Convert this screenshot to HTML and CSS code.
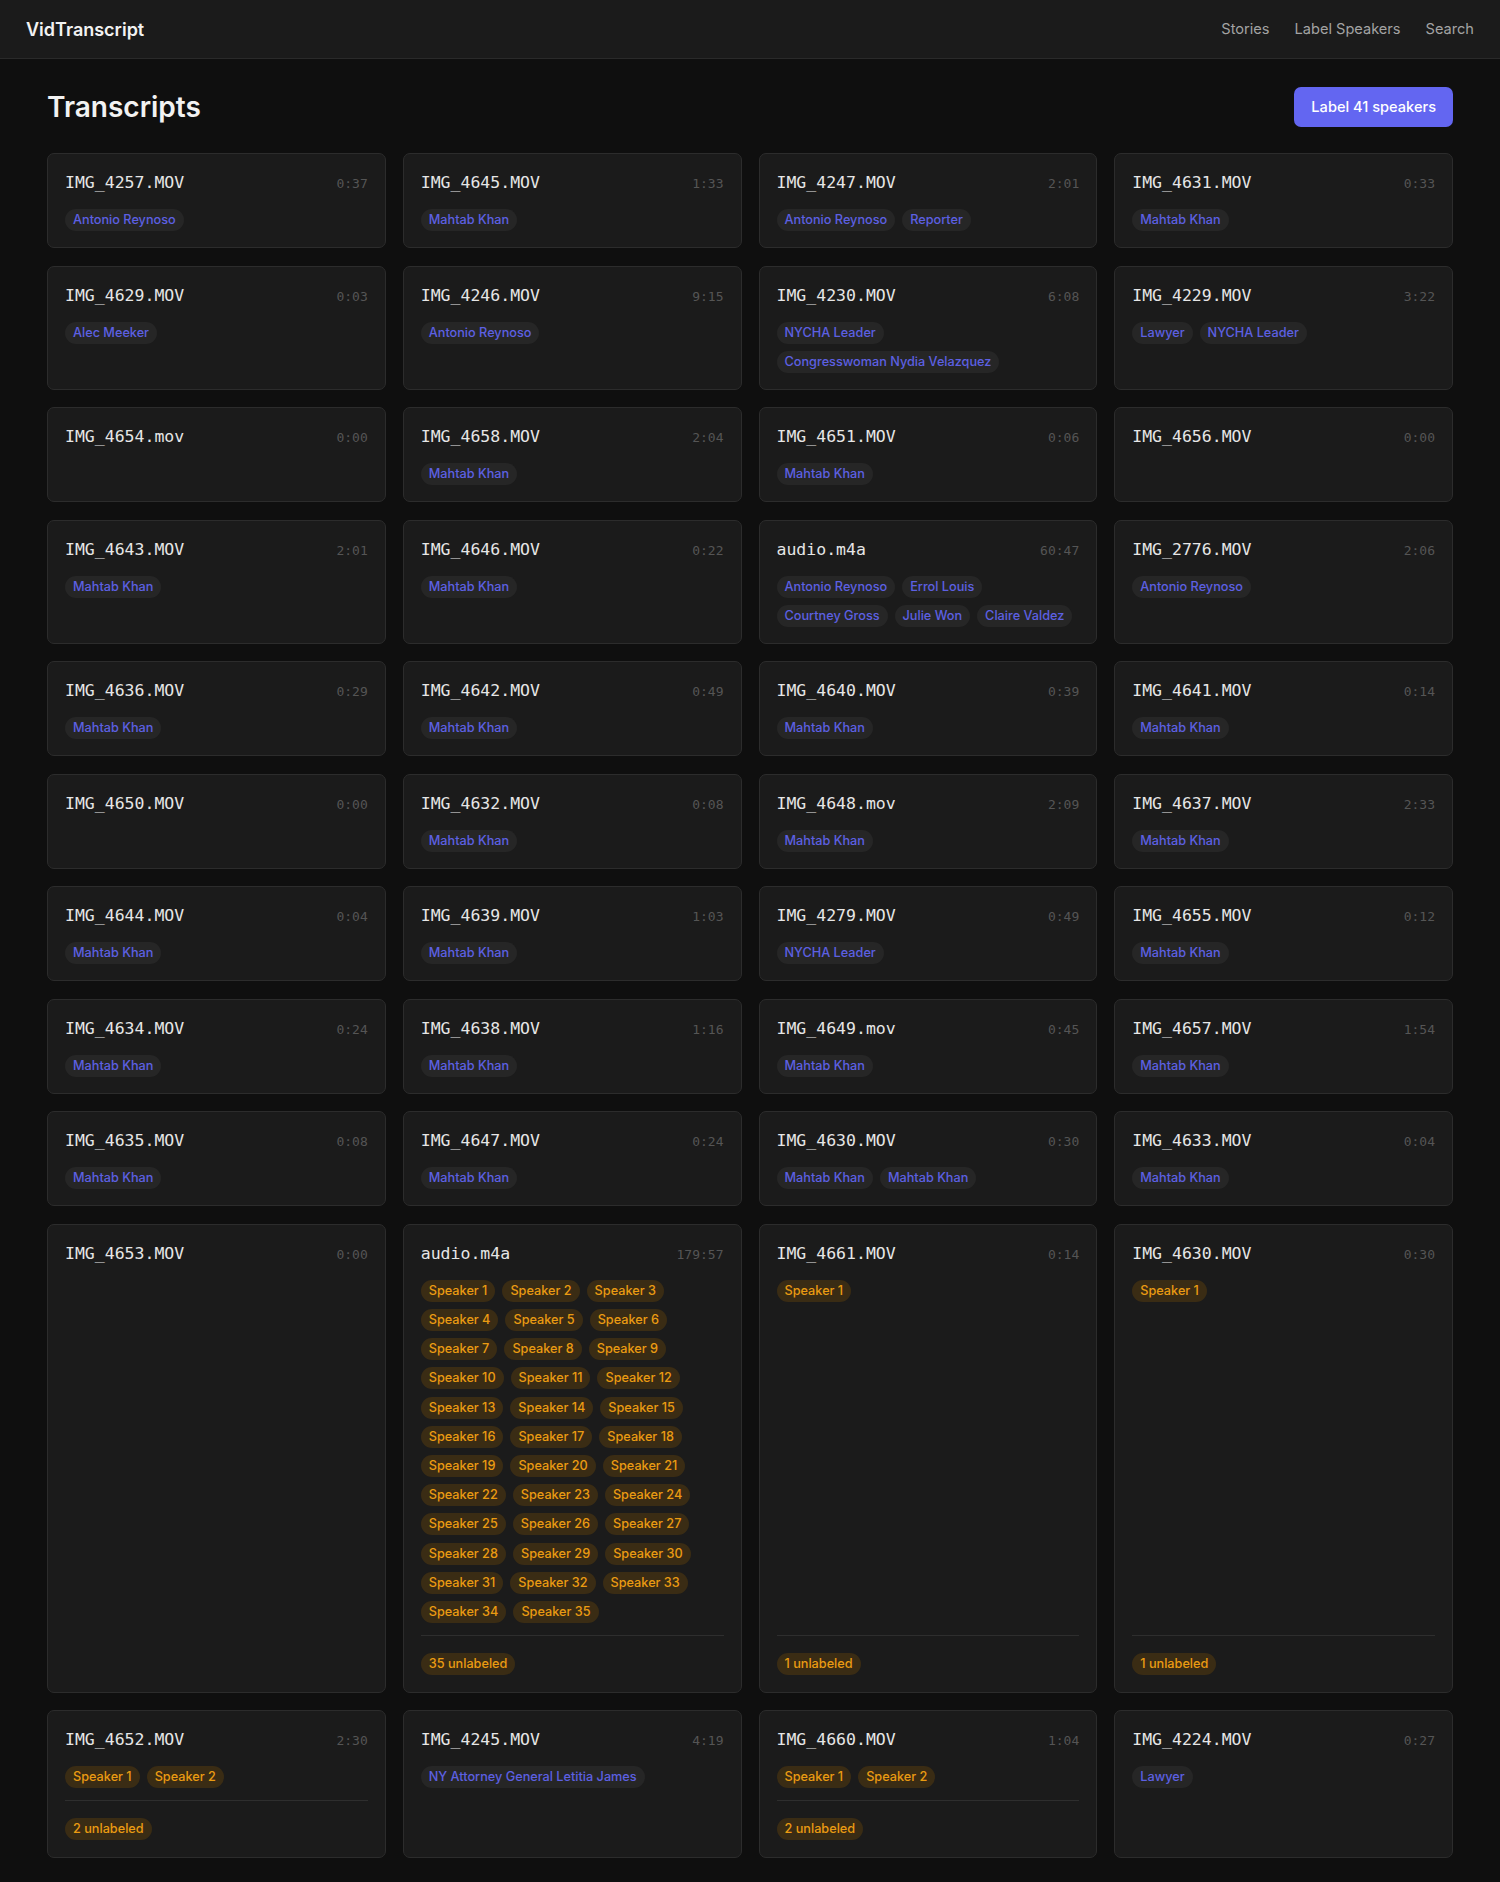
FILE: index.html
```html
<!DOCTYPE html>
<html lang="en">
  <head>
    <meta charset="UTF-8" />
    <meta name="viewport" content="width=device-width, initial-scale=1.0" />
    <title>VidTranscript</title>
    <link rel="stylesheet" href="styles.css">
  </head>
  <body>
    <header class="topbar">
      <a href="#" class="brand">VidTranscript</a>
      <nav class="nav">
        <a href="#">Stories</a>
        <a href="#">Label Speakers</a>
        <a href="#">Search</a>
      </nav>
    </header>

    <main class="page">
      <div class="page-head">
        <h1 class="page-title">Transcripts</h1>
        <a href="#" class="btn btn-primary">Label 41 speakers</a>
      </div>

      <div class="grid">
        <!-- row 1 -->
        <div class="card">
          <div class="card-head"><span class="file">IMG_4257.MOV</span><span class="dur">0:37</span></div>
          <div class="chips"><span class="chip">Antonio Reynoso</span></div>
        </div>
        <div class="card">
          <div class="card-head"><span class="file">IMG_4645.MOV</span><span class="dur">1:33</span></div>
          <div class="chips"><span class="chip">Mahtab Khan</span></div>
        </div>
        <div class="card">
          <div class="card-head"><span class="file">IMG_4247.MOV</span><span class="dur">2:01</span></div>
          <div class="chips"><span class="chip">Antonio Reynoso</span><span class="chip">Reporter</span></div>
        </div>
        <div class="card">
          <div class="card-head"><span class="file">IMG_4631.MOV</span><span class="dur">0:33</span></div>
          <div class="chips"><span class="chip">Mahtab Khan</span></div>
        </div>

        <!-- row 2 -->
        <div class="card">
          <div class="card-head"><span class="file">IMG_4629.MOV</span><span class="dur">0:03</span></div>
          <div class="chips"><span class="chip">Alec Meeker</span></div>
        </div>
        <div class="card">
          <div class="card-head"><span class="file">IMG_4246.MOV</span><span class="dur">9:15</span></div>
          <div class="chips"><span class="chip">Antonio Reynoso</span></div>
        </div>
        <div class="card">
          <div class="card-head"><span class="file">IMG_4230.MOV</span><span class="dur">6:08</span></div>
          <div class="chips"><span class="chip">NYCHA Leader</span><span class="chip">Congresswoman Nydia Velazquez</span></div>
        </div>
        <div class="card">
          <div class="card-head"><span class="file">IMG_4229.MOV</span><span class="dur">3:22</span></div>
          <div class="chips"><span class="chip">Lawyer</span><span class="chip">NYCHA Leader</span></div>
        </div>

        <!-- row 3 -->
        <div class="card">
          <div class="card-head"><span class="file">IMG_4654.mov</span><span class="dur">0:00</span></div>
        </div>
        <div class="card">
          <div class="card-head"><span class="file">IMG_4658.MOV</span><span class="dur">2:04</span></div>
          <div class="chips"><span class="chip">Mahtab Khan</span></div>
        </div>
        <div class="card">
          <div class="card-head"><span class="file">IMG_4651.MOV</span><span class="dur">0:06</span></div>
          <div class="chips"><span class="chip">Mahtab Khan</span></div>
        </div>
        <div class="card">
          <div class="card-head"><span class="file">IMG_4656.MOV</span><span class="dur">0:00</span></div>
        </div>

        <!-- row 4 -->
        <div class="card">
          <div class="card-head"><span class="file">IMG_4643.MOV</span><span class="dur">2:01</span></div>
          <div class="chips"><span class="chip">Mahtab Khan</span></div>
        </div>
        <div class="card">
          <div class="card-head"><span class="file">IMG_4646.MOV</span><span class="dur">0:22</span></div>
          <div class="chips"><span class="chip">Mahtab Khan</span></div>
        </div>
        <div class="card">
          <div class="card-head"><span class="file">audio.m4a</span><span class="dur">60:47</span></div>
          <div class="chips">
            <span class="chip">Antonio Reynoso</span><span class="chip">Errol Louis</span>
            <span class="chip">Courtney Gross</span><span class="chip">Julie Won</span><span class="chip">Claire Valdez</span>
          </div>
        </div>
        <div class="card">
          <div class="card-head"><span class="file">IMG_2776.MOV</span><span class="dur">2:06</span></div>
          <div class="chips"><span class="chip">Antonio Reynoso</span></div>
        </div>

        <!-- row 5 -->
        <div class="card">
          <div class="card-head"><span class="file">IMG_4636.MOV</span><span class="dur">0:29</span></div>
          <div class="chips"><span class="chip">Mahtab Khan</span></div>
        </div>
        <div class="card">
          <div class="card-head"><span class="file">IMG_4642.MOV</span><span class="dur">0:49</span></div>
          <div class="chips"><span class="chip">Mahtab Khan</span></div>
        </div>
        <div class="card">
          <div class="card-head"><span class="file">IMG_4640.MOV</span><span class="dur">0:39</span></div>
          <div class="chips"><span class="chip">Mahtab Khan</span></div>
        </div>
        <div class="card">
          <div class="card-head"><span class="file">IMG_4641.MOV</span><span class="dur">0:14</span></div>
          <div class="chips"><span class="chip">Mahtab Khan</span></div>
        </div>

        <!-- row 6 -->
        <div class="card">
          <div class="card-head"><span class="file">IMG_4650.MOV</span><span class="dur">0:00</span></div>
        </div>
        <div class="card">
          <div class="card-head"><span class="file">IMG_4632.MOV</span><span class="dur">0:08</span></div>
          <div class="chips"><span class="chip">Mahtab Khan</span></div>
        </div>
        <div class="card">
          <div class="card-head"><span class="file">IMG_4648.mov</span><span class="dur">2:09</span></div>
          <div class="chips"><span class="chip">Mahtab Khan</span></div>
        </div>
        <div class="card">
          <div class="card-head"><span class="file">IMG_4637.MOV</span><span class="dur">2:33</span></div>
          <div class="chips"><span class="chip">Mahtab Khan</span></div>
        </div>

        <!-- row 7 -->
        <div class="card">
          <div class="card-head"><span class="file">IMG_4644.MOV</span><span class="dur">0:04</span></div>
          <div class="chips"><span class="chip">Mahtab Khan</span></div>
        </div>
        <div class="card">
          <div class="card-head"><span class="file">IMG_4639.MOV</span><span class="dur">1:03</span></div>
          <div class="chips"><span class="chip">Mahtab Khan</span></div>
        </div>
        <div class="card">
          <div class="card-head"><span class="file">IMG_4279.MOV</span><span class="dur">0:49</span></div>
          <div class="chips"><span class="chip">NYCHA Leader</span></div>
        </div>
        <div class="card">
          <div class="card-head"><span class="file">IMG_4655.MOV</span><span class="dur">0:12</span></div>
          <div class="chips"><span class="chip">Mahtab Khan</span></div>
        </div>

        <!-- row 8 -->
        <div class="card">
          <div class="card-head"><span class="file">IMG_4634.MOV</span><span class="dur">0:24</span></div>
          <div class="chips"><span class="chip">Mahtab Khan</span></div>
        </div>
        <div class="card">
          <div class="card-head"><span class="file">IMG_4638.MOV</span><span class="dur">1:16</span></div>
          <div class="chips"><span class="chip">Mahtab Khan</span></div>
        </div>
        <div class="card">
          <div class="card-head"><span class="file">IMG_4649.mov</span><span class="dur">0:45</span></div>
          <div class="chips"><span class="chip">Mahtab Khan</span></div>
        </div>
        <div class="card">
          <div class="card-head"><span class="file">IMG_4657.MOV</span><span class="dur">1:54</span></div>
          <div class="chips"><span class="chip">Mahtab Khan</span></div>
        </div>

        <!-- row 9 -->
        <div class="card">
          <div class="card-head"><span class="file">IMG_4635.MOV</span><span class="dur">0:08</span></div>
          <div class="chips"><span class="chip">Mahtab Khan</span></div>
        </div>
        <div class="card">
          <div class="card-head"><span class="file">IMG_4647.MOV</span><span class="dur">0:24</span></div>
          <div class="chips"><span class="chip">Mahtab Khan</span></div>
        </div>
        <div class="card">
          <div class="card-head"><span class="file">IMG_4630.MOV</span><span class="dur">0:30</span></div>
          <div class="chips"><span class="chip">Mahtab Khan</span><span class="chip">Mahtab Khan</span></div>
        </div>
        <div class="card">
          <div class="card-head"><span class="file">IMG_4633.MOV</span><span class="dur">0:04</span></div>
          <div class="chips"><span class="chip">Mahtab Khan</span></div>
        </div>

        <!-- row 10 -->
        <div class="card">
          <div class="card-head"><span class="file">IMG_4653.MOV</span><span class="dur">0:00</span></div>
        </div>
        <div class="card">
          <div class="card-head"><span class="file">audio.m4a</span><span class="dur">179:57</span></div>
          <div class="chips">
            <span class="chip chip-warn">Speaker 1</span><span class="chip chip-warn">Speaker 2</span><span class="chip chip-warn">Speaker 3</span>
            <span class="chip chip-warn">Speaker 4</span><span class="chip chip-warn">Speaker 5</span><span class="chip chip-warn">Speaker 6</span>
            <span class="chip chip-warn">Speaker 7</span><span class="chip chip-warn">Speaker 8</span><span class="chip chip-warn">Speaker 9</span>
            <span class="chip chip-warn">Speaker 10</span><span class="chip chip-warn">Speaker 11</span><span class="chip chip-warn">Speaker 12</span>
            <span class="chip chip-warn">Speaker 13</span><span class="chip chip-warn">Speaker 14</span><span class="chip chip-warn">Speaker 15</span>
            <span class="chip chip-warn">Speaker 16</span><span class="chip chip-warn">Speaker 17</span><span class="chip chip-warn">Speaker 18</span>
            <span class="chip chip-warn">Speaker 19</span><span class="chip chip-warn">Speaker 20</span><span class="chip chip-warn">Speaker 21</span>
            <span class="chip chip-warn">Speaker 22</span><span class="chip chip-warn">Speaker 23</span><span class="chip chip-warn">Speaker 24</span>
            <span class="chip chip-warn">Speaker 25</span><span class="chip chip-warn">Speaker 26</span><span class="chip chip-warn">Speaker 27</span>
            <span class="chip chip-warn">Speaker 28</span><span class="chip chip-warn">Speaker 29</span><span class="chip chip-warn">Speaker 30</span>
            <span class="chip chip-warn">Speaker 31</span><span class="chip chip-warn">Speaker 32</span><span class="chip chip-warn">Speaker 33</span>
            <span class="chip chip-warn">Speaker 34</span><span class="chip chip-warn">Speaker 35</span>
          </div>
          <div class="card-foot"><span class="chip chip-warn">35 unlabeled</span></div>
        </div>
        <div class="card">
          <div class="card-head"><span class="file">IMG_4661.MOV</span><span class="dur">0:14</span></div>
          <div class="chips"><span class="chip chip-warn">Speaker 1</span></div>
          <div class="card-foot"><span class="chip chip-warn">1 unlabeled</span></div>
        </div>
        <div class="card">
          <div class="card-head"><span class="file">IMG_4630.MOV</span><span class="dur">0:30</span></div>
          <div class="chips"><span class="chip chip-warn">Speaker 1</span></div>
          <div class="card-foot"><span class="chip chip-warn">1 unlabeled</span></div>
        </div>

        <!-- row 11 -->
        <div class="card">
          <div class="card-head"><span class="file">IMG_4652.MOV</span><span class="dur">2:30</span></div>
          <div class="chips"><span class="chip chip-warn">Speaker 1</span><span class="chip chip-warn">Speaker 2</span></div>
          <div class="card-foot"><span class="chip chip-warn">2 unlabeled</span></div>
        </div>
        <div class="card">
          <div class="card-head"><span class="file">IMG_4245.MOV</span><span class="dur">4:19</span></div>
          <div class="chips"><span class="chip">NY Attorney General Letitia James</span></div>
        </div>
        <div class="card">
          <div class="card-head"><span class="file">IMG_4660.MOV</span><span class="dur">1:04</span></div>
          <div class="chips"><span class="chip chip-warn">Speaker 1</span><span class="chip chip-warn">Speaker 2</span></div>
          <div class="card-foot"><span class="chip chip-warn">2 unlabeled</span></div>
        </div>
        <div class="card">
          <div class="card-head"><span class="file">IMG_4224.MOV</span><span class="dur">0:27</span></div>
          <div class="chips"><span class="chip">Lawyer</span></div>
        </div>
      </div>
    </main>
  </body>
</html>
```

FILE: styles.css
```css
:root {
  --bg: #0f0f0f;
  --surface: #1b1b1b;
  --border: #2c2c2c;
  --text: #e6e6e6;
  --muted: #a3a3a3;
  --dim: #555555;
  --primary: #6366f1;
  --label: #5d60e2;
  --warn: #ea9b12;
}

html,
body {
  margin: 0;
  padding: 0;
  background-color: var(--bg);
  color: var(--text);
  font-family: Inter, "Noto Sans", sans-serif;
}

a {
  color: inherit;
  text-decoration: none;
}

.topbar {
  height: 58px;
  display: flex;
  align-items: center;
  justify-content: space-between;
  padding: 0 26px;
  background-color: #1b1b1b;
  border-bottom: 1px solid #2a2a2a;
}

.brand {
  font-size: 18px;
  font-weight: 600;
  color: #f2f2f2;
}

.nav {
  display: flex;
  gap: 25px;
  font-size: 14.6px;
  color: var(--muted);
}

.page {
  padding: 28px 47px 26px;
}

.page-head {
  display: flex;
  align-items: center;
  justify-content: space-between;
  margin-bottom: 26px;
}

.page-title {
  margin: 0;
  font-size: 28px;
  font-weight: 600;
  color: #f2f2f2;
}

.btn {
  display: inline-flex;
  align-items: center;
  justify-content: center;
  height: 40px;
  padding: 0 17px;
  border-radius: 7px;
  font-size: 14.6px;
  font-weight: 500;
  white-space: nowrap;
}

.btn-primary {
  background-color: var(--primary);
  color: white;
}

.grid {
  display: grid;
  grid-template-columns: repeat(4, 1fr);
  gap: 17.5px 17px;
}

.card {
  display: flex;
  flex-direction: column;
  gap: 12px;
  padding: 17px 17px 16px;
  background-color: var(--surface);
  border: 1px solid var(--border);
  border-radius: 7px;
}

.card-head {
  display: flex;
  align-items: baseline;
  justify-content: space-between;
  height: 24px;
  line-height: 24px;
  margin-bottom: 2px;
}

.file {
  font-family: "DejaVu Sans Mono", "Liberation Mono", monospace;
  font-size: 16.5px;
  color: var(--text);
}

.dur {
  font-family: "DejaVu Sans Mono", "Liberation Mono", monospace;
  font-size: 13px;
  color: var(--dim);
}

.chips {
  display: flex;
  flex-wrap: wrap;
  gap: 7.2px 7px;
}

.chip {
  display: inline-block;
  height: 22px;
  line-height: 22px;
  padding: 0 8px;
  border-radius: 11px;
  font-size: 12.7px;
  font-weight: 500;
  background-color: #262626;
  color: var(--label);
  white-space: nowrap;
}

.chip-warn {
  background-color: #3a2c14;
  color: var(--warn);
}

.card-foot {
  margin-top: auto;
  padding: 16px 0 1px;
  border-top: 1px solid #2e2e2e;
}
```
